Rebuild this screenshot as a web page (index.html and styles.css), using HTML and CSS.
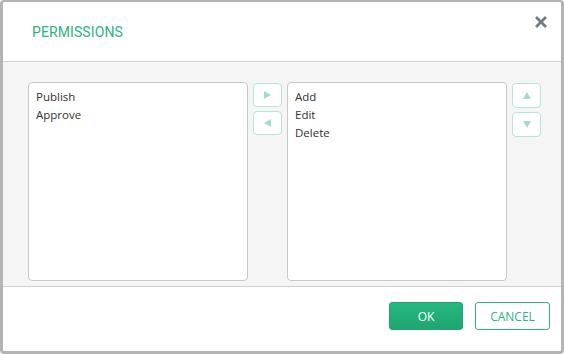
FILE: index.html
```html
<!DOCTYPE html>
<html lang="en">
<head>
  <meta charset="UTF-8" />
  <title>Permissions</title>
  <link rel="stylesheet" href="styles.css">
</head>
<body>
  <div class="dialog">
    <div class="dlg-head">
      <h2 class="dlg-title">PERMISSIONS</h2>
      <svg class="dlg-close" width="14" height="14" viewBox="0 0 14 14">
        <path d="M2 2 L12 12 M12 2 L2 12" stroke="#737a82" stroke-width="2.8" stroke-linecap="butt" />
      </svg>
    </div>

    <div class="dlg-body">
      <ul class="pick-list">
        <li>Publish</li>
        <li>Approve</li>
      </ul>
      <div class="tool-col">
        <button class="tool-btn"><span class="tri tri-right"></span></button>
        <button class="tool-btn"><span class="tri tri-left"></span></button>
      </div>
      <ul class="pick-list">
        <li>Add</li>
        <li>Edit</li>
        <li>Delete</li>
      </ul>
      <div class="tool-col">
        <button class="tool-btn tall"><span class="tri tri-up"></span></button>
        <button class="tool-btn tall"><span class="tri tri-down"></span></button>
      </div>
    </div>

    <div class="dlg-foot">
      <button class="btn btn-ok">OK</button>
      <button class="btn btn-cancel">CANCEL</button>
    </div>
  </div>
</body>
</html>
```

FILE: styles.css
```css
* {
  box-sizing: border-box;
  margin: 0;
  padding: 0;
}
body {
  font-family: "Open Sans", "Noto Sans", sans-serif;
  background: #fff;
}
.dialog {
  width: 564px;
  height: 354px;
  border: 3px solid #b4b4b4;
  border-top-width: 2px;
  border-radius: 4px;
  background: #fff;
  display: flex;
  flex-direction: column;
}
.dlg-head {
  height: 60px;
  border-bottom: 1px solid #d0d0d0;
  display: flex;
  align-items: center;
  justify-content: space-between;
  padding: 0 13px 0 29px;
}
.dlg-title {
  font-family: Roboto, sans-serif;
  font-weight: 400;
  font-size: 14px;
  color: #2bb582;
  letter-spacing: 0.1px;
  margin-top: 1px;
}
.dlg-close {
  margin-top: -19px;
}
.dlg-body {
  height: 225px;
  background: #f5f5f5;
  border-bottom: 1px solid #d0d0d0;
  display: flex;
  gap: 5px;
  padding: 20px 20px 5px 25px;
}
.pick-list {
  list-style: none;
  width: 220px;
  background: #fff;
  border: 1px solid #c8c8c8;
  border-radius: 4px;
  padding: 5px 7px;
  font-size: 11.5px;
  line-height: 18px;
  color: #333;
}
.tool-col {
  display: flex;
  flex-direction: column;
  gap: 4px;
  padding-top: 1px;
}
.tool-btn {
  width: 29px;
  height: 24px;
  background: #fff;
  border: 1px solid #b6e6d3;
  border-radius: 4px;
  display: flex;
  align-items: center;
  justify-content: center;
}
.tool-btn.tall {
  height: 25px;
}
.tri {
  width: 0;
  height: 0;
  border: 4px solid transparent;
}
.tri-right {
  border-left: 7px solid #9fe0c5;
  border-right-width: 0;
}
.tri-left {
  border-right: 7px solid #9fe0c5;
  border-left-width: 0;
}
.tri-up {
  border-bottom: 7px solid #9fe0c5;
  border-top-width: 0;
}
.tri-down {
  border-top: 7px solid #9fe0c5;
  border-bottom-width: 0;
}
.dlg-foot {
  flex: 1;
  display: flex;
  justify-content: flex-end;
  gap: 12px;
  padding: 15px 11px 0 0;
}
.btn {
  height: 28px;
  font-family: "Open Sans", "Noto Sans", sans-serif;
  font-size: 12px;
  border-radius: 3px;
  cursor: pointer;
}
.btn-ok {
  width: 74px;
  background: linear-gradient(#25b87e, #1fa570);
  border: 1px solid #1fa36f;
  color: #fff;
}
.btn-cancel {
  width: 75px;
  background: #fff;
  border: 1px solid #2bb582;
  color: #2bb582;
}
```
